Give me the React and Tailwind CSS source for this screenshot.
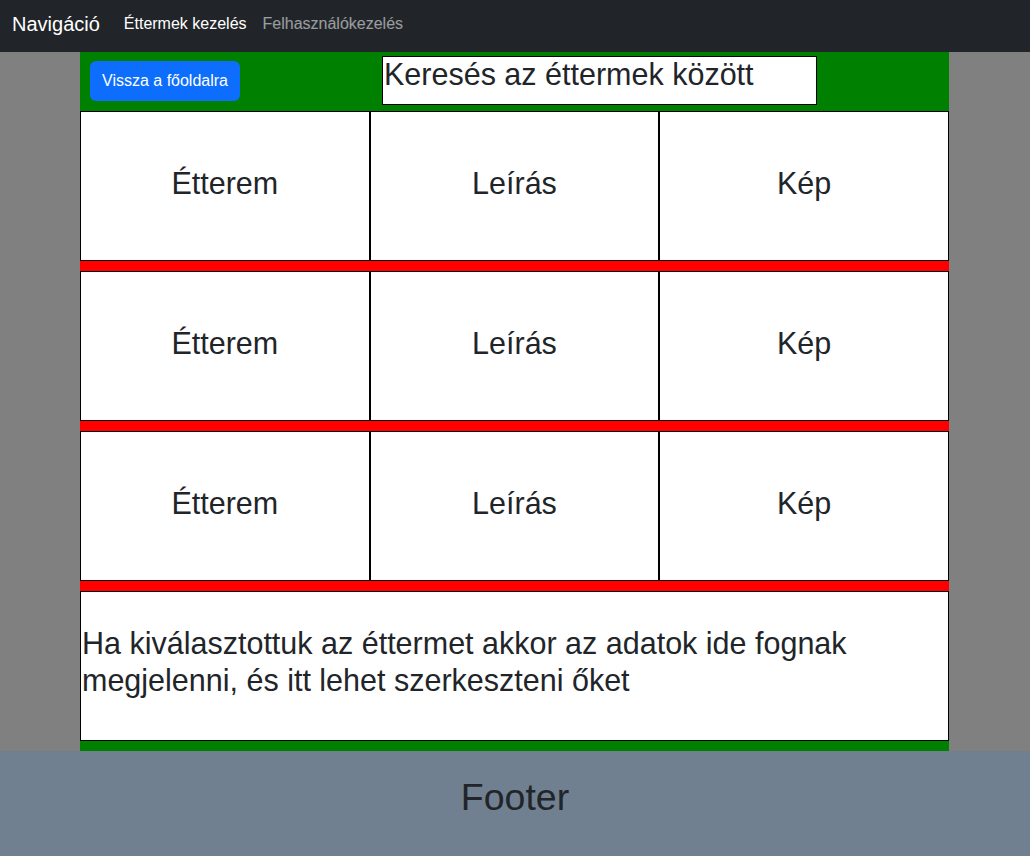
import React from 'react';

const rows = [0, 1, 2];

function Cell({ children }) {
  return (
    <div className="h-[150px] border border-black bg-white flex items-center justify-center pb-[6px]">
      <span className="text-[30.5px] leading-[1.2]">{children}</span>
    </div>
  );
}

export default function App() {
  return (
    <div className="min-h-[856px] flex flex-col font-['Liberation_Sans',Arial,sans-serif] text-[#212529]">
      {/* Navbar */}
      <nav className="h-[52px] bg-[#212529] flex items-center pb-[4px] pl-3">
        <span className="text-[20px] text-white mr-4">Navigáció</span>
        <a className="px-2 text-[16px] text-white">Éttermek kezelés</a>
        <a className="px-2 text-[16px] text-white/55">Felhasználókezelés</a>
      </nav>

      {/* Main */}
      <main className="bg-[#808080] flex-1">
        <div className="w-[869px] ml-[80px] bg-[#008000] pb-[10px]">
          {/* Header */}
          <div className="h-[59px] flex items-start">
            <button className="mt-[9px] ml-[10px] h-[40px] px-3 rounded-md bg-[#0d6efd] text-white text-[16px]">
              Vissza a főoldalra
            </button>
            <div className="mt-[4px] ml-[142px] w-[435px] h-[49px] border border-black bg-white px-[1px] text-[30.5px] leading-[1.15]">
              Keresés az éttermek között
            </div>
          </div>

          {/* Restaurant rows */}
          {rows.map((r) => (
            <div key={r} className="bg-[#ff0000] pb-[10px]">
              <div className="grid grid-cols-3">
                <Cell>Étterem</Cell>
                <Cell>Leírás</Cell>
                <Cell>Kép</Cell>
              </div>
            </div>
          ))}

          {/* Details */}
          <div className="h-[150px] border border-black bg-white flex items-center px-[1px]">
            <h2 className="text-[30.5px] leading-[1.2] mb-2">
              Ha kiválasztottuk az éttermet akkor az adatok ide fognak megjelenni, és itt lehet szerkeszteni őket
            </h2>
          </div>
        </div>
      </main>

      {/* Footer */}
      <footer className="h-[105px] bg-[#708090] pt-6 text-center">
        <h1 className="text-[37.5px] leading-[1.2]">Footer</h1>
      </footer>
    </div>
  );
}
